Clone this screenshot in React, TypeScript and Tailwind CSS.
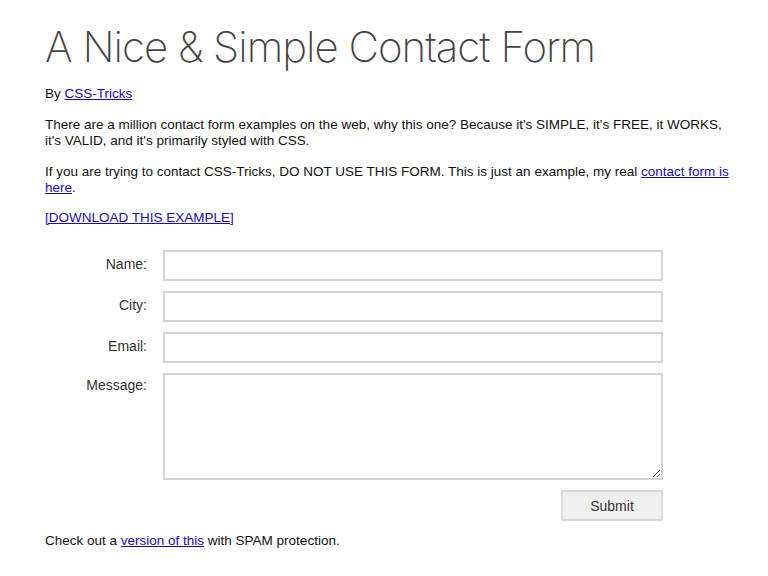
export default function App() {
  const fields = ["Name", "City", "Email"];
  return (
    <div className="min-h-[576px] bg-white pl-[45px] pr-[28px] pt-[20px] text-[13.5px] leading-[16px] text-[#111] [font-family:'Liberation_Sans',Arial,sans-serif]">
      <h1 className="text-[42px] leading-[54px] font-extralight tracking-[-1px] text-[#444] [font-family:Inter,'Liberation_Sans',sans-serif]">
        A Nice &amp; Simple Contact Form
      </h1>
      <p className="mt-[12px]">
        By <a href="#" className="text-[#1a0dab] underline">CSS-Tricks</a>
      </p>
      <p className="mt-[15px]">
        There are a million contact form examples on the web, why this one? Because it's SIMPLE, it's FREE, it WORKS, it's VALID, and it's primarily styled with CSS.
      </p>
      <p className="mt-[15px]">
        If you are trying to contact CSS-Tricks, DO NOT USE THIS FORM. This is just an example, my real{" "}
        <a href="#" className="text-[#1a0dab] underline">contact form is here</a>.
      </p>
      <p className="mt-[14px]">
        <a href="#" className="text-[#1a0dab] underline">[DOWNLOAD THIS EXAMPLE]</a>
      </p>
      <form className="mt-[24px] flex flex-col gap-[10px]">
        {fields.map((f) => (
          <div key={f} className="flex items-start">
            <label className="w-[102px] pt-[6px] text-right text-[14px] text-[#333]">{f}:</label>
            <input className="ml-[16px] h-[31px] w-[500px] border-2 border-[#d4d4d4] bg-white" />
          </div>
        ))}
        <div className="flex items-start">
          <label className="w-[102px] pt-[4px] text-right text-[14px] text-[#333]">Message:</label>
          <textarea className="ml-[16px] h-[107px] w-[500px] border-2 border-[#d4d4d4] bg-white" />
        </div>
        <div className="flex pl-[516px]">
          <button type="button" className="h-[31px] w-[102px] border-2 border-[#d8d8d8] bg-[#efefef] text-[14px] text-[#333]">
            Submit
          </button>
        </div>
      </form>
      <p className="mt-[12px]">
        Check out a <a href="#" className="text-[#1a0dab] underline">version of this</a> with SPAM protection.
      </p>
    </div>
  );
}
